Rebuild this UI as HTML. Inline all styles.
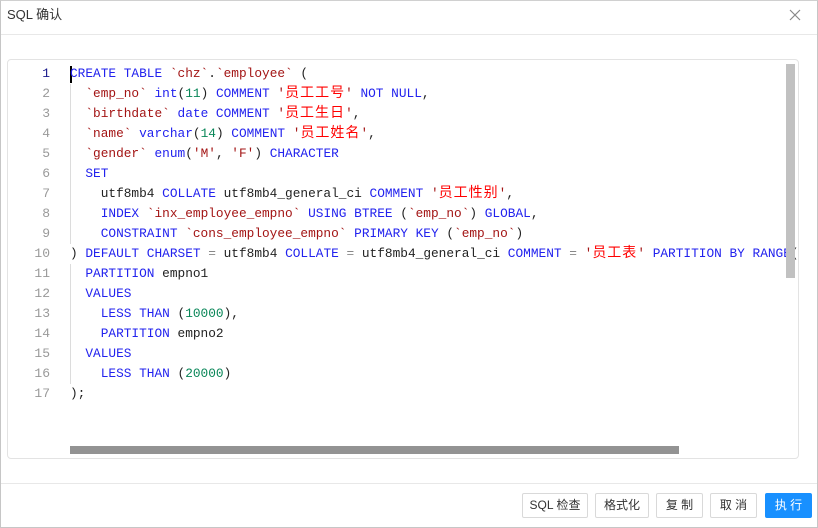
<!DOCTYPE html>
<html><head><meta charset="utf-8"><style>
*{margin:0;padding:0;box-sizing:border-box}
body{width:818px;height:528px;overflow:hidden;background:#fff;font-family:"Liberation Sans","Noto Sans CJK SC",sans-serif;position:relative}
.frame{position:absolute;left:0;top:0;width:818px;height:528px;border:1px solid #c6c6c6;border-top-color:#d0d0d0}
.title{position:absolute;left:7px;top:4px;font-size:13px;color:#333}
.close{position:absolute;left:789px;top:9px;width:12px;height:12px}
.hr{position:absolute;left:1px;width:816px;height:1px;background:#e8e8e8}
.editor{position:absolute;left:7px;top:59px;width:792px;height:400px;border:1px solid #e3e3e3;border-radius:4px;overflow:hidden}
.ln{position:absolute;left:0;width:42px;text-align:right;font-family:"Liberation Mono",monospace;font-size:13px;color:#999;line-height:20px}
.code{position:absolute;left:62px;top:4px;width:900px;font-family:"Liberation Mono","Noto Sans CJK SC",monospace;font-size:12.8px;color:#222}
.code div{height:20px;line-height:20px;overflow:visible;white-space:pre}
.k{color:#2222ee}.s{color:#a31515}.n{color:#098658}.c{color:#f00;font-family:"Noto Sans CJK SC",sans-serif;font-size:14px;letter-spacing:1px;line-height:14px}.o{color:#888}
.guide{position:absolute;width:1px;background:#dcdcdc}
.vs{position:absolute;left:778px;top:4px;width:9px;height:214px;background:#c1c1c1}
.hs{position:absolute;left:62px;top:386px;width:609px;height:8px;background:#939393}
.btn{position:absolute;top:493px;height:25px;border:1px solid #d9d9d9;border-radius:2px;font-size:12px;color:#333;text-align:center;line-height:23px;background:#fff}
.pri{background:#1890ff;border-color:#1890ff;color:#fff}
</style></head><body>
<div class="frame"></div>
<div class="title">SQL 确认</div>
<svg class="close" viewBox="0 0 12 12"><path d="M1 1L11 11M11 1L1 11" stroke="#888" stroke-width="1.2"/></svg>
<div class="hr" style="top:34px"></div>
<div class="editor">
<div class="ln" style="top:4px">
<div style="color:#1a1a8c">1</div><div>2</div><div>3</div><div>4</div><div>5</div><div>6</div><div>7</div><div>8</div><div>9</div><div>10</div><div>11</div><div>12</div><div>13</div><div>14</div><div>15</div><div>16</div><div>17</div>
</div>
<div class="guide" style="left:62px;top:24px;height:160px"></div>
<div class="guide" style="left:62px;top:204px;height:120px"></div>
<div style="position:absolute;left:62px;top:6px;width:2px;height:17px;background:#000"></div>
<div class="code">
<div><span class="k">CREATE TABLE</span> <span class="s">`chz`</span>.<span class="s">`employee`</span> (</div>
<div>  <span class="s">`emp_no`</span> <span class="k">int</span>(<span class="n">11</span>) <span class="k">COMMENT</span> <span class="s">'</span><span class="c">员工工号</span><span class="s">'</span> <span class="k">NOT NULL</span>,</div>
<div>  <span class="s">`birthdate`</span> <span class="k">date COMMENT</span> <span class="s">'</span><span class="c">员工生日</span><span class="s">'</span>,</div>
<div>  <span class="s">`name`</span> <span class="k">varchar</span>(<span class="n">14</span>) <span class="k">COMMENT</span> <span class="s">'</span><span class="c">员工姓名</span><span class="s">'</span>,</div>
<div>  <span class="s">`gender`</span> <span class="k">enum</span>(<span class="s">'M'</span>, <span class="s">'F'</span>) <span class="k">CHARACTER</span></div>
<div>  <span class="k">SET</span></div>
<div>    utf8mb4 <span class="k">COLLATE</span> utf8mb4_general_ci <span class="k">COMMENT</span> <span class="s">'</span><span class="c">员工性别</span><span class="s">'</span>,</div>
<div>    <span class="k">INDEX</span> <span class="s">`inx_employee_empno`</span> <span class="k">USING BTREE</span> (<span class="s">`emp_no`</span>) <span class="k">GLOBAL</span>,</div>
<div>    <span class="k">CONSTRAINT</span> <span class="s">`cons_employee_empno`</span> <span class="k">PRIMARY KEY</span> (<span class="s">`emp_no`</span>)</div>
<div>) <span class="k">DEFAULT CHARSET</span> <span class="o">=</span> utf8mb4 <span class="k">COLLATE</span> <span class="o">=</span> utf8mb4_general_ci <span class="k">COMMENT</span> <span class="o">=</span> <span class="s">'</span><span class="c">员工表</span><span class="s">'</span> <span class="k">PARTITION BY RANGE</span>(</div>
<div>  <span class="k">PARTITION</span> empno1</div>
<div>  <span class="k">VALUES</span></div>
<div>    <span class="k">LESS THAN</span> (<span class="n">10000</span>),</div>
<div>    <span class="k">PARTITION</span> empno2</div>
<div>  <span class="k">VALUES</span></div>
<div>    <span class="k">LESS THAN</span> (<span class="n">20000</span>)</div>
<div>);</div>
</div>
<div class="vs"></div>
<div class="hs"></div>
</div>
<div class="hr" style="top:483px"></div>
<div class="btn" style="left:522px;width:66px">SQL 检查</div>
<div class="btn" style="left:595px;width:54px">格式化</div>
<div class="btn" style="left:656px;width:47px">复 制</div>
<div class="btn" style="left:710px;width:47px">取 消</div>
<div class="btn pri" style="left:765px;width:47px">执 行</div>
</body></html>
